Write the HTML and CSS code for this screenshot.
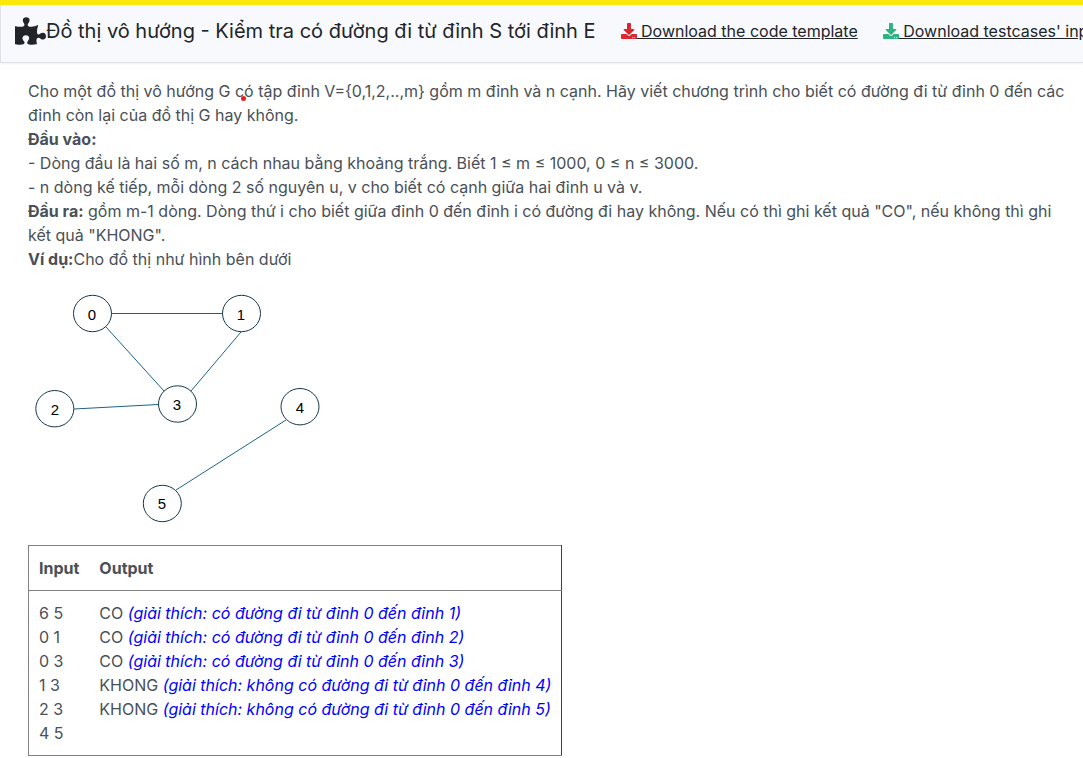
FILE: index.html
```html
<!DOCTYPE html>
<html lang="vi">
<head>
<meta charset="utf-8">
<meta name="viewport" content="width=device-width, initial-scale=1">
<title>Đồ thị vô hướng</title>
<link rel="stylesheet" href="styles.css">
</head>
<body>
<header class="topbar">
  <h1 class="title"><svg class="puzzle" viewBox="0 0 576 512" aria-hidden="true"><path d="M519.442 288.651c-41.519 0-59.5 31.593-82.058 31.593C377.409 320.244 432 144 432 144s-196.288 80-196.288-3.297c0-35.827 36.288-46.25 36.288-85.985C272 19.216 243.885 0 210.539 0c-34.654 0-66.366 18.891-66.366 56.346 0 41.364 31.711 59.277 31.711 81.75C175.885 207.719 0 166.758 0 166.758v333.237s178.635 41.047 178.635-28.662c0-22.473-40-40.107-40-81.471 0-37.456 29.25-56.346 63.577-56.346 33.673 0 61.788 19.216 61.788 54.717 0 39.735-36.288 50.158-36.288 85.985 0 60.803 129.675 25.73 181.23 25.73 0 0-34.725-120.101 25.827-120.101 35.962 0 46.423 36.152 86.308 36.152C556.712 416 576 387.99 576 354.443c0-34.199-18.962-65.792-56.558-65.792z"/></svg>Đồ thị vô hướng - Kiểm tra có đường đi từ đỉnh S tới đỉnh E</h1>
  <a class="download" href="#template"><svg class="download-icon red" viewBox="0 0 512 512" aria-hidden="true"><path d="M216 0h80c13.3 0 24 10.7 24 24v168h87.7c17.8 0 26.7 21.5 14.1 34.1L269.7 378.3c-7.5 7.5-19.8 7.5-27.3 0L90.1 226.1c-12.6-12.6-3.7-34.1 14.1-34.1H192V24c0-13.3 10.7-24 24-24zm296 376v112c0 13.3-10.7 24-24 24H24c-13.3 0-24-10.7-24-24V376c0-13.3 10.7-24 24-24h146.7l49 49c20.1 20.1 52.5 20.1 72.6 0l49-49H488c13.3 0 24 10.7 24 24zm-124 88c0-11-9-20-20-20s-20 9-20 20 9 20 20 20 20-9 20-20zm64 0c0-11-9-20-20-20s-20 9-20 20 9 20 20 20 20-9 20-20z"/></svg> Download the code template</a>
  <a class="download" href="#testcases"><svg class="download-icon green" viewBox="0 0 512 512" aria-hidden="true"><path d="M216 0h80c13.3 0 24 10.7 24 24v168h87.7c17.8 0 26.7 21.5 14.1 34.1L269.7 378.3c-7.5 7.5-19.8 7.5-27.3 0L90.1 226.1c-12.6-12.6-3.7-34.1 14.1-34.1H192V24c0-13.3 10.7-24 24-24zm296 376v112c0 13.3-10.7 24-24 24H24c-13.3 0-24-10.7-24-24V376c0-13.3 10.7-24 24-24h146.7l49 49c20.1 20.1 52.5 20.1 72.6 0l49-49H488c13.3 0 24 10.7 24 24zm-124 88c0-11-9-20-20-20s-20 9-20 20 9 20 20 20 20-9 20-20zm64 0c0-11-9-20-20-20s-20 9-20 20 9 20 20 20 20-9 20-20z"/></svg> Download testcases' input</a>
</header>
<main class="problem">
  <p>Cho một đồ thị vô hướng G <span class="marked">c<span class="dot"></span></span>ó tập đỉnh V={0,1,2,..,m} gồm m đỉnh và n cạnh. Hãy viết chương trình cho biết có đường đi từ đỉnh 0 đến các đỉnh còn lại của đồ thị G hay không.</p>
  <p><strong>Đầu vào:</strong></p>
  <p>- Dòng đầu là hai số m, n cách nhau bằng khoảng trắng. Biết 1 ≤ m ≤ 1000, 0 ≤ n ≤ 3000.</p>
  <p>- n dòng kế tiếp, mỗi dòng 2 số nguyên u, v cho biết có cạnh giữa hai đỉnh u và v.</p>
  <p><strong>Đầu ra:</strong> gồm m-1 dòng. Dòng thứ i cho biết giữa đỉnh 0 đến đỉnh i có đường đi hay không. Nếu có thì ghi kết quả "CO", nếu không thì ghi kết quả "KHONG".</p>
  <p><strong>Ví dụ:</strong>Cho đồ thị như hình bên dưới</p>
  <svg class="graph" width="300" height="240" viewBox="28 288 300 240" role="img" aria-label="Đồ thị 6 đỉnh">
    <g class="edges">
      <path d="M111 313.500H223"/>
      <path d="M106 327L164 391M241 332L191 391M74 409L158 404.500M286 420L176 490"/>
    </g>
    <g class="nodes">
      <ellipse cx="92.500" cy="313.500" rx="19" ry="18.200"/>
      <ellipse cx="241.500" cy="313.500" rx="19" ry="18.200"/>
      <ellipse cx="54.800" cy="408.700" rx="19" ry="18.200"/>
      <ellipse cx="177.500" cy="404" rx="19" ry="18.200"/>
      <ellipse cx="300" cy="406.700" rx="19" ry="18.200"/>
      <ellipse cx="162.300" cy="503.500" rx="19" ry="18.200"/>
    </g>
    <g class="labels">
      <text x="92" y="320">0</text>
      <text x="241" y="320">1</text>
      <text x="55" y="415">2</text>
      <text x="177" y="410">3</text>
      <text x="300" y="413">4</text>
      <text x="162" y="509">5</text>
    </g>
  </svg>
  <table class="samples">
    <thead><tr><th>Input</th><th>Output</th></tr></thead>
    <tbody>
      <tr>
        <td>6 5<br>0 1<br>0 3<br>1 3<br>2 3<br>4 5</td>
        <td>CO <em>(giải thích: có đường đi từ đỉnh 0 đến đỉnh 1)</em><br>CO <em>(giải thích: có đường đi từ đỉnh 0 đến đỉnh 2)</em><br>CO <em>(giải thích: có đường đi từ đỉnh 0 đến đỉnh 3)</em><br>KHONG <em>(giải thích: không có đường đi từ đỉnh 0 đến đỉnh 4)</em><br>KHONG <em>(giải thích: không có đường đi từ đỉnh 0 đến đỉnh 5)</em></td>
      </tr>
    </tbody>
  </table>
</main>
</body>
</html>
```
FILE: styles.css
```css
* { box-sizing: border-box; }
body {
  margin: 0;
  border-top: 5px solid #fbe80a;
  background: #fff;
  color: #495057;
  font: 16px/24px Inter, "Noto Sans", sans-serif;
}
.topbar {
  display: flex;
  align-items: center;
  gap: 25px;
  padding: 11px 0 16px 14px;
  overflow: hidden;
  white-space: nowrap;
  background: #f8f9fc;
  border-left: 1px solid #dee2e6;
  border-bottom: 1px solid #dee2e6;
  box-shadow: 0 1px 2px rgba(0, 0, 0, 0.06);
  color: #212529;
}
.title {
  display: flex;
  flex: none;
  align-items: center;
  margin: 0;
  font-size: 20px;
  line-height: 30px;
  font-weight: 400;
}
.puzzle {
  width: 31px;
  height: 28px;
  fill: #212529;
}
.download {
  flex: none;
  color: #212529;
  text-decoration: underline;
}
.download-icon {
  width: 16px;
  height: 16px;
  vertical-align: -2px;
}
.red { fill: #dc2630; }
.green { fill: #2fb380; }
.problem { padding: 16px 16px 0 28px; }
.problem p { margin: 0; }
.marked { position: relative; }
.dot {
  position: absolute;
  right: -2px;
  bottom: 0;
  width: 5px;
  height: 5px;
  border-radius: 50%;
  background: #ec1c24;
}
.graph {
  display: block;
  margin: 17px 0;
}
.edges {
  fill: none;
  stroke: #1d6284;
}
.nodes {
  fill: #fff;
  stroke: #16384a;
  stroke-width: 1;
}
.labels {
  fill: #000;
  font: 15px "Liberation Sans", Arial, sans-serif;
  text-anchor: middle;
}
.samples {
  border: 1px solid #808080;
  border-right-color: #404040;
  border-collapse: collapse;
}
.samples th,
.samples td {
  padding: 10px;
  text-align: left;
  vertical-align: top;
}
.samples th { border-bottom: 1px solid #808080; }
.samples em { color: #0000ff; }
```
